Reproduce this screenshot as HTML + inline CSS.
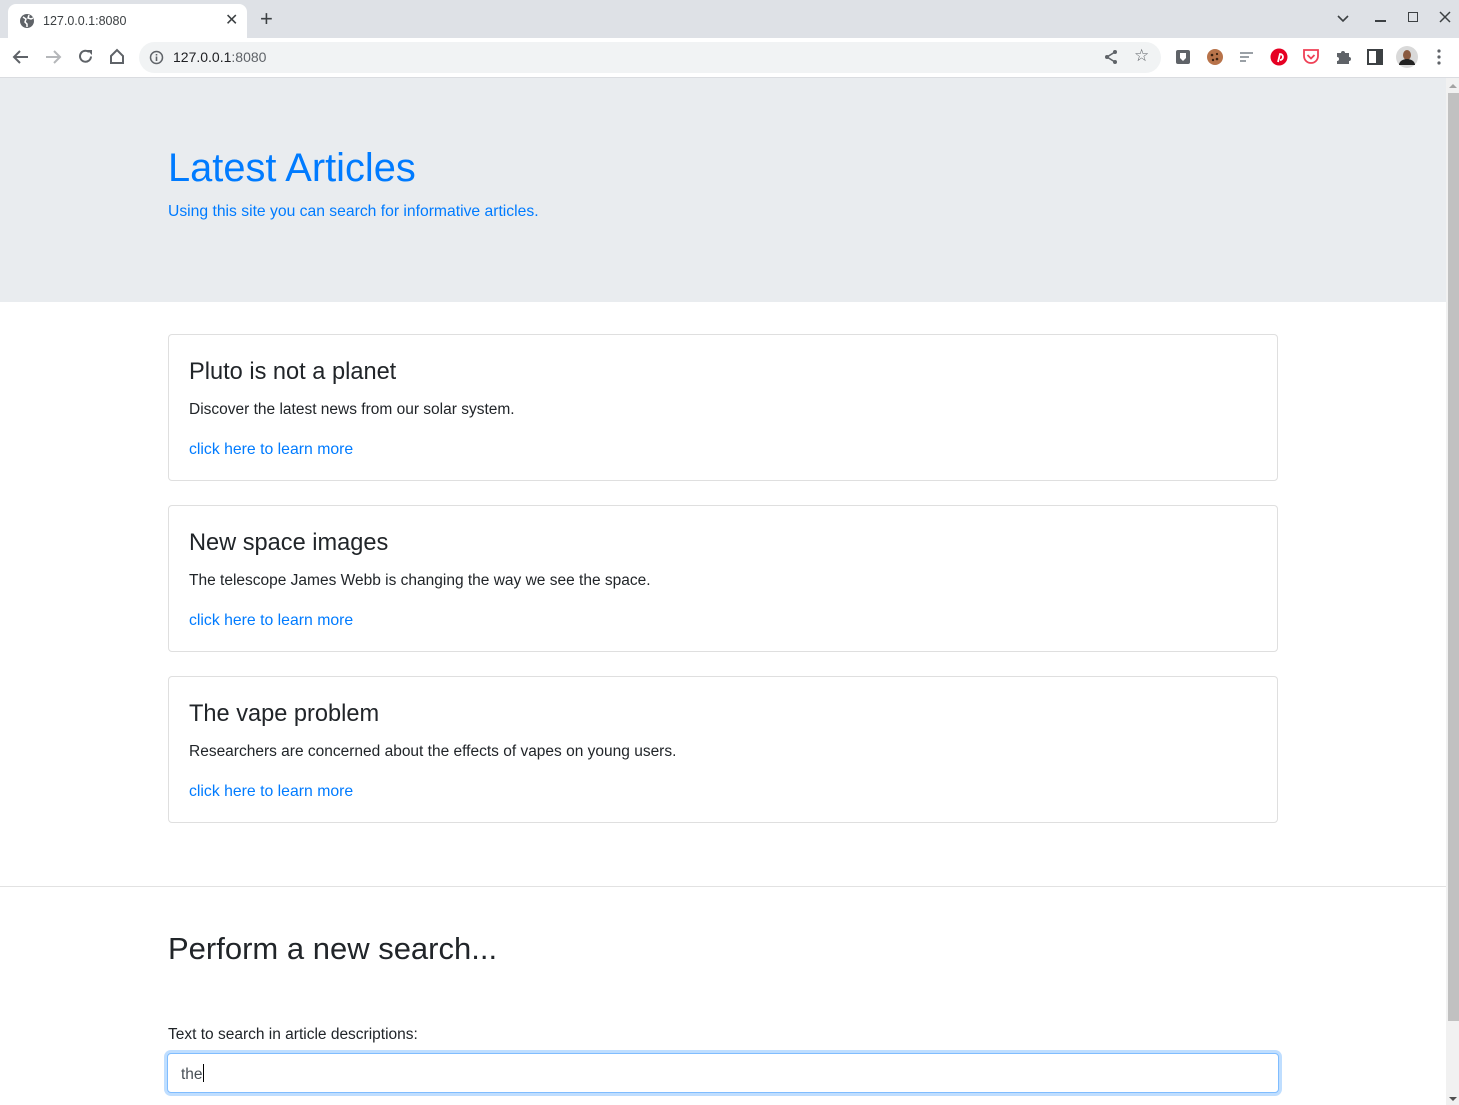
<!DOCTYPE html>
<html><head><meta charset="utf-8">
<style>
*{box-sizing:border-box;margin:0;padding:0}
body{width:1459px;height:1105px;overflow:hidden;font-family:"Liberation Sans",sans-serif;background:#fff;position:relative;color:#212529}
.a{position:absolute}
.tabbar{left:0;top:0;width:1459px;height:38px;background:#dee1e6}
.tab{left:8px;top:4px;width:239px;height:34px;background:#fff;border-radius:8px 8px 0 0}
.toolbar{left:0;top:38px;width:1459px;height:40px;background:#fff;border-bottom:1px solid #dadce0}
.omni{left:139px;top:42px;width:1022px;height:31px;background:#f1f3f4;border-radius:16px}
.jumbo{left:0;top:78px;width:1446px;height:224px;background:#e9ecef}
.card{left:168px;width:1110px;height:147px;border:1px solid rgba(0,0,0,.125);border-radius:4px;background:#fff}
.card h5{position:absolute;left:20px;top:24px;font-size:23.6px;font-weight:400;color:#212529}
.card p{position:absolute;left:20px;top:66px;font-size:15.5px;color:#212529}
.card span{position:absolute;left:20px;top:106px;font-size:15.8px;color:#007bff}
.sb{left:1446px;top:78px;width:13px;height:1027px;background:#f1f1f1}
.thumb{left:1448px;top:93px;width:11px;height:928px;background:#c1c1c1}
</style></head><body>
<div class="a tabbar"></div>
<div class="a tab"></div>
<svg class="a" style="left:19px;top:13px" width="16" height="16" viewBox="0 0 16 16"><circle cx="8" cy="8" r="7" fill="#5f6368"/><path d="M4 4l3 2-1 3 2 2v3M10 2l-1 3 3 1 2-1" stroke="#fff" stroke-width="1.5" fill="none"/></svg>
<div class="a" style="left:43px;top:14px;font-size:12.5px;color:#3c4043">127.0.0.1:8080</div>
<div class="a" style="left:225px;top:10px;font-size:16px;color:#3c4043">✕</div>
<div class="a" style="left:260px;top:6px;font-size:22px;color:#3c4043">+</div>
<svg class="a" style="left:1336px;top:14px" width="14" height="10"><path d="M2 2l5 5 5-5" stroke="#3c4043" stroke-width="1.6" fill="none"/></svg>
<div class="a" style="left:1375px;top:20px;width:11px;height:1.5px;background:#3c4043"></div>
<div class="a" style="left:1408px;top:12px;width:10px;height:10px;border:1.5px solid #3c4043"></div>
<svg class="a" style="left:1439px;top:11px" width="12" height="12"><path d="M1 1l10 10M11 1L1 11" stroke="#3c4043" stroke-width="1.5"/></svg>
<div class="a toolbar"></div>
<svg class="a" style="left:12px;top:49px" width="18" height="16"><path d="M16 8H3M8 2L2 8l6 6" stroke="#5f6368" stroke-width="2" fill="none"/></svg>
<svg class="a" style="left:44px;top:49px" width="18" height="16"><path d="M2 8h13M10 2l6 6-6 6" stroke="#b5b7ba" stroke-width="2" fill="none"/></svg>
<svg class="a" style="left:77px;top:48px" width="17" height="17"><path d="M14 8.5A5.5 5.5 0 1 1 12 4" stroke="#5f6368" stroke-width="2" fill="none"/><path d="M10 2h5v5z" fill="#5f6368"/></svg>
<svg class="a" style="left:108px;top:48px" width="18" height="17"><path d="M3 8l6-6 6 6v7H3z" stroke="#5f6368" stroke-width="2" fill="none"/></svg>
<div class="a omni"></div>
<svg class="a" style="left:149px;top:50px" width="15" height="15"><circle cx="7.5" cy="7.5" r="6" stroke="#5f6368" stroke-width="1.5" fill="none"/><path d="M7.5 6.5v4.5M7.5 4v1.5" stroke="#5f6368" stroke-width="1.6"/></svg>
<div class="a" style="left:173px;top:49px;font-size:14px;color:#202124">127.0.0.1<span style="color:#5f6368">:8080</span></div>
<svg class="a" style="left:1103px;top:49px" width="16" height="16"><path d="M12 3L4 8l8 5" stroke="#5f6368" stroke-width="1.6" fill="none"/><circle cx="12" cy="3" r="2" fill="#5f6368"/><circle cx="4" cy="8" r="2" fill="#5f6368"/><circle cx="12" cy="13" r="2" fill="#5f6368"/></svg>
<div class="a" style="left:1134px;top:46px;font-size:17px;color:#5f6368">☆</div>
<svg class="a" style="left:1175px;top:49px" width="16" height="16"><rect x="1" y="1" width="14" height="14" rx="2" fill="#5f6368"/><path d="M5 4h6v5l-3 3-3-3z" fill="#fff"/></svg>
<svg class="a" style="left:1206px;top:48px" width="18" height="18"><circle cx="9" cy="9" r="8" fill="#b8734a"/><circle cx="6" cy="7" r="1.3" fill="#3a2010"/><circle cx="11" cy="11" r="1.3" fill="#3a2010"/><circle cx="7" cy="12" r="1.2" fill="#3a2010"/><circle cx="11" cy="6" r="1.1" fill="#3a2010"/></svg>
<svg class="a" style="left:1239px;top:51px" width="16" height="12"><path d="M1 2h13M1 6h9M1 10h6" stroke="#9aa0a6" stroke-width="2"/></svg>
<svg class="a" style="left:1270px;top:48px" width="18" height="18"><circle cx="9" cy="9" r="8.5" fill="#e60023"/><path d="M8 14l2-8a3 3 0 1 1 0 6" stroke="#fff" stroke-width="1.8" fill="none"/></svg>
<svg class="a" style="left:1302px;top:48px" width="18" height="17"><path d="M2 2h14v6a7 7 0 0 1-14 0z" stroke="#ef4056" stroke-width="1.8" fill="none"/><path d="M5.5 7l3.5 3.5L12.5 7" stroke="#ef4056" stroke-width="1.8" fill="none"/></svg>
<svg class="a" style="left:1335px;top:48px" width="16" height="17"><path d="M2 5h4a2 2 0 1 1 4 0h4v4a2 2 0 1 1 0 4v3H2v-3a2 2 0 1 0 0-4z" fill="#5f6368"/></svg>
<svg class="a" style="left:1367px;top:49px" width="16" height="16"><rect x="1" y="1" width="14" height="14" stroke="#3c4043" stroke-width="2" fill="none"/><rect x="9" y="1" width="6" height="14" fill="#3c4043"/></svg>
<svg class="a" style="left:1396px;top:46px" width="22" height="22"><circle cx="11" cy="11" r="11" fill="#d9d9d9"/><ellipse cx="11" cy="9" rx="4" ry="5" fill="#8a5a40"/><path d="M3 19a8 6 0 0 1 16 0" fill="#222"/></svg>
<svg class="a" style="left:1437px;top:49px" width="4" height="16"><circle cx="2" cy="2" r="1.6" fill="#5f6368"/><circle cx="2" cy="8" r="1.6" fill="#5f6368"/><circle cx="2" cy="14" r="1.6" fill="#5f6368"/></svg>

<div class="a jumbo"></div>
<div class="a" style="left:168px;top:146px;font-size:39.8px;color:#007bff">Latest Articles</div>
<div class="a" style="left:168px;top:203px;font-size:15.7px;color:#007bff">Using this site you can search for informative articles.</div>

<div class="a card" style="top:334px"><h5>Pluto is not a planet</h5><p>Discover the latest news from our solar system.</p><span>click here to learn more</span></div>
<div class="a card" style="top:505px"><h5>New space images</h5><p>The telescope James Webb is changing the way we see the space.</p><span>click here to learn more</span></div>
<div class="a card" style="top:676px"><h5>The vape problem</h5><p>Researchers are concerned about the effects of vapes on young users.</p><span>click here to learn more</span></div>

<div class="a" style="left:0;top:886px;width:1446px;height:1px;background:#e2e2e2"></div>
<div class="a" style="left:168px;top:931px;font-size:31px;color:#212529">Perform a new search...</div>
<div class="a" style="left:168px;top:1026px;font-size:15.5px;color:#212529">Text to search in article descriptions:</div>
<div class="a" style="left:167px;top:1053px;width:1112px;height:40px;border:1px solid #80bdff;border-radius:4px;box-shadow:0 0 0 3px rgba(0,123,255,.25);background:#fff"></div>
<div class="a" style="left:181px;top:1064px;font-size:15.5px;color:#495057">the<span style="display:inline-block;width:1px;height:18px;background:#000;vertical-align:-3px"></span></div>

<div class="a sb"></div>
<div class="a thumb"></div>
<svg class="a" style="left:1448px;top:82px" width="10" height="8"><path d="M1 6l4-4 4 4z" fill="#a3a3a3"/></svg>
<svg class="a" style="left:1448px;top:1095px" width="10" height="8"><path d="M1 2l4 4 4-4z" fill="#505050"/></svg>
</body></html>
